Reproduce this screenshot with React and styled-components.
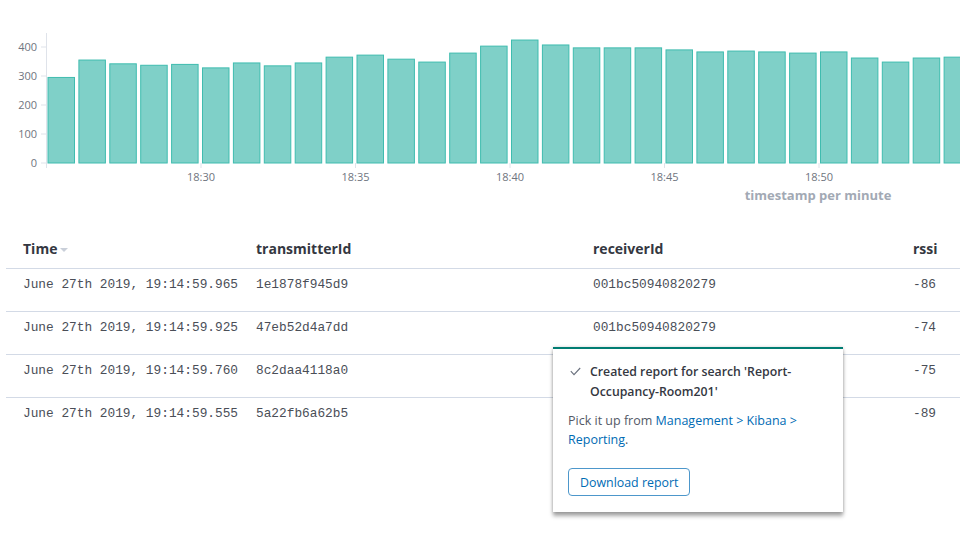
import React from "react";
import styled, { createGlobalStyle } from "styled-components";

const GlobalStyle = createGlobalStyle`
  html, body {
    margin: 0;
    padding: 0;
    background: #fff;
    font-family: "Open Sans", "Liberation Sans", sans-serif;
    overflow: hidden;
  }
`;

const counts = [
  295, 355, 342, 337, 340, 328, 345, 335, 345, 365, 372, 358, 348, 379, 403,
  424, 407, 397, 397, 397, 390, 383, 386, 383, 379, 383, 362, 348, 362, 365,
];

const rows = [
  { time: "June 27th 2019, 19:14:59.965", tx: "1e1878f945d9", rx: "001bc50940820279", rssi: "-86" },
  { time: "June 27th 2019, 19:14:59.925", tx: "47eb52d4a7dd", rx: "001bc50940820279", rssi: "-74" },
  { time: "June 27th 2019, 19:14:59.760", tx: "8c2daa4118a0", rx: "001bc50940820279", rssi: "-75" },
  { time: "June 27th 2019, 19:14:59.555", tx: "5a22fb6a62b5", rx: "001bc50940820279", rssi: "-89" },
];

const AXIS_X = 46.5;
const BASE_Y = 163;
const STEP = 30.9;
const PX_PER_UNIT = 0.29;

const Page = styled.div`
  position: relative;
  width: 960px;
  height: 540px;
`;

const ChartWrap = styled.div`
  height: 228px;
  svg {
    display: block;
  }
`;

const Table = styled.div`
  margin-left: 6px;
`;

const Row = styled.div`
  display: grid;
  grid-template-columns: 233px 337px 320px 1fr;
  height: ${(p) => (p.$head ? "41px" : "43px")};
  align-items: ${(p) => (p.$head ? "center" : "start")};
  border-bottom: ${(p) => (p.$last ? "none" : "1px solid #d3dae6")};
  box-sizing: border-box;
`;

const HeadCell = styled.div`
  padding-left: 17px;
  font-weight: 700;
  font-size: 14px;
  color: #343741;
  display: flex;
  align-items: center;
  gap: 3px;
`;

const SortArrow = styled.span`
  width: 0;
  height: 0;
  border-left: 4px solid transparent;
  border-right: 4px solid transparent;
  border-top: 4px solid #c9cfd9;
  margin-top: 4px;
`;

const Cell = styled.div`
  padding-left: 17px;
  padding-top: 8px;
  font-family: "Liberation Mono", monospace;
  font-size: 12.8px;
  line-height: 15px;
  color: #4a4e57;
  white-space: nowrap;
`;

const Toast = styled.div`
  position: absolute;
  left: 553px;
  top: 347px;
  width: 290px;
  box-sizing: border-box;
  background: #fff;
  border-top: 2px solid #017d73;
  padding: 13px 16px 16px 15px;
  box-shadow: 0 4px 4px rgba(0, 0, 0, 0.35), 0 0 3px rgba(0, 0, 0, 0.18);
`;

const ToastTitle = styled.div`
  display: flex;
  gap: 9px;
  font-size: 12.3px;
  font-weight: 600;
  line-height: 20px;
  color: #343741;
  svg {
    flex: none;
    margin: 5px 0 0 2px;
  }
`;

const ToastBody = styled.p`
  margin: 9px 0 19px;
  font-size: 12.5px;
  line-height: 19px;
  color: #535966;
`;

const Link = styled.a`
  color: #006bb4;
  text-decoration: none;
`;

const Button = styled.button`
  height: 28px;
  padding: 0 11px;
  border: 1px solid #4d97cb;
  border-radius: 4px;
  background: #fff;
  color: #006bb4;
  font-family: "Open Sans", "Liberation Sans", sans-serif;
  font-size: 12.4px;
`;

const Chart = () => (
  <svg width="960" height="228" viewBox="0 0 960 228">
    <line x1={AXIS_X} y1="33" x2={AXIS_X} y2="168" stroke="#dfe3ea" strokeWidth="1" />
    {[0, 100, 200, 300, 400].map((v) => {
      const y = BASE_Y - v * PX_PER_UNIT;
      return (
        <g key={v}>
          <line x1="41" y1={y} x2={AXIS_X} y2={y} stroke="#dfe3ea" />
          <text x="37" y={y + 4} textAnchor="end" fontSize="11" fill="#6f7580" fontFamily="Open Sans">
            {v}
          </text>
        </g>
      );
    })}
    {counts.map((c, i) => {
      const h = c * PX_PER_UNIT;
      return (
        <rect
          key={i}
          x={AXIS_X + i * STEP + 1.5}
          y={BASE_Y - h}
          width="26.5"
          height={h}
          fill="#7fd0c8"
          stroke="#3fbcaf"
          strokeWidth="1"
        />
      );
    })}
    {["18:30", "18:35", "18:40", "18:45", "18:50", "18:55"].map((t, i) => {
      const x = AXIS_X + (i + 1) * 5 * STEP;
      return (
        <g key={t}>
          <line x1={x} y1={BASE_Y} x2={x} y2="168" stroke="#dfe3ea" />
          <text x={x} y="181" textAnchor="middle" fontSize="11" fill="#6f7580" fontFamily="Open Sans">
            {t}
          </text>
        </g>
      );
    })}
    <text x="818" y="200" textAnchor="middle" fontSize="13" fontWeight="700" fill="#a2a9b4" fontFamily="Open Sans">
      timestamp per minute
    </text>
  </svg>
);

const Check = () => (
  <svg width="11" height="9" viewBox="0 0 11 9">
    <path d="M0.8 4.2 L4 7.6 L10.2 1" fill="none" stroke="#69707d" strokeWidth="1.1" />
  </svg>
);

export default function App() {
  return (
    <Page>
      <GlobalStyle />
      <ChartWrap>
        <Chart />
      </ChartWrap>
      <Table>
        <Row $head>
          <HeadCell>
            Time <SortArrow />
          </HeadCell>
          <HeadCell>transmitterId</HeadCell>
          <HeadCell>receiverId</HeadCell>
          <HeadCell>rssi</HeadCell>
        </Row>
        {rows.map((r, i) => (
          <Row key={i} $last={i === rows.length - 1}>
            <Cell>{r.time}</Cell>
            <Cell>{r.tx}</Cell>
            <Cell>{r.rx}</Cell>
            <Cell>{r.rssi}</Cell>
          </Row>
        ))}
      </Table>
      <Toast>
        <ToastTitle>
          <Check />
          <span>Created report for search 'Report-Occupancy-Room201'</span>
        </ToastTitle>
        <ToastBody>
          Pick it up from <Link>Management &gt; Kibana &gt; Reporting</Link>.
        </ToastBody>
        <Button>Download report</Button>
      </Toast>
    </Page>
  );
}
